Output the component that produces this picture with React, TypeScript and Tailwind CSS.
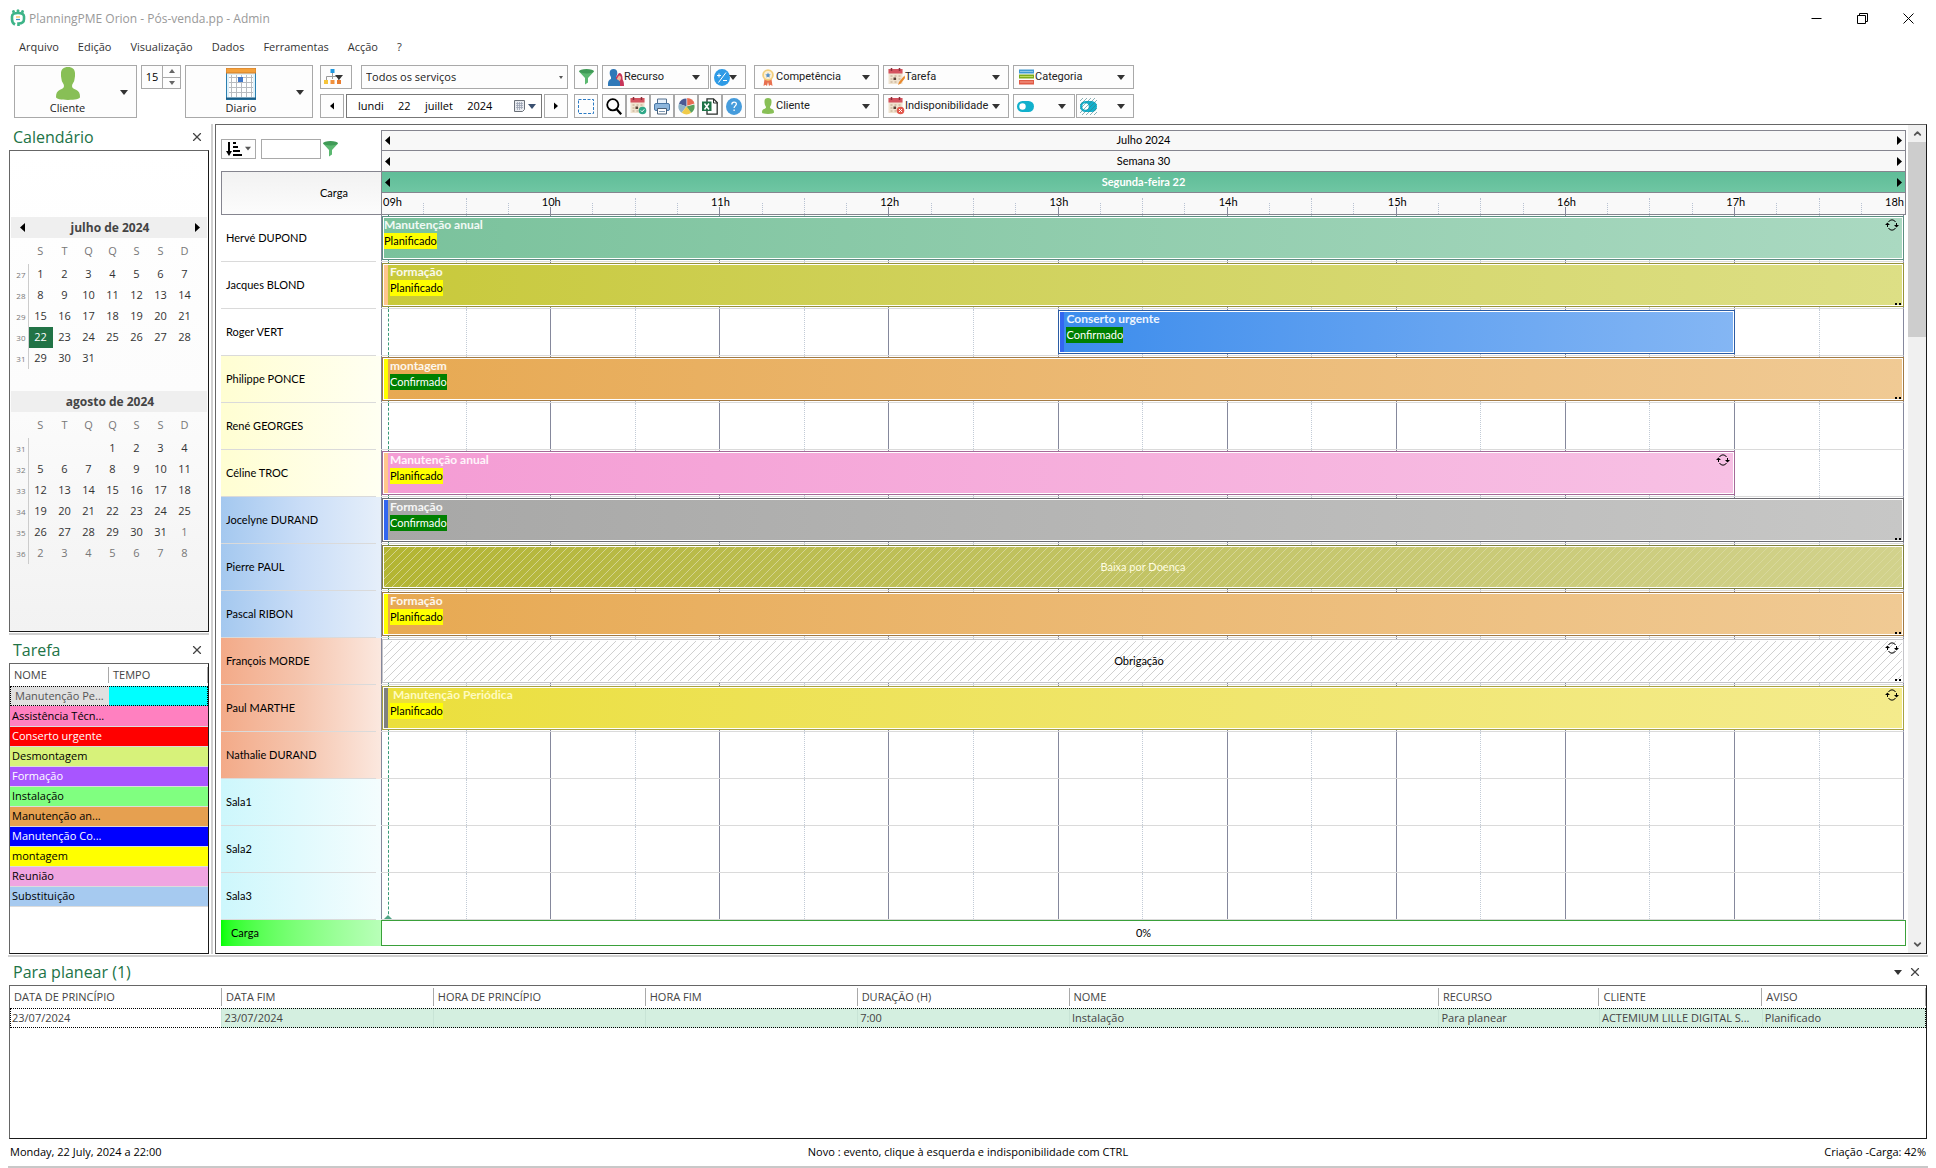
import React, { useState } from 'react';
import { ChevronDown, ChevronUp, X } from 'lucide-react';

interface Task {
  title?: string;
  status?: 'Planificado' | 'Confirmado';
  start: number;
  end: number;
  look: string;
  titleColor?: string;
  accent?: string;
  repeat?: boolean;
  more?: boolean;
  hatch?: { id: string; color: string };
  centered?: string;
}

interface Resource {
  name: string;
  group: string;
  task?: Task;
}

const white = 'bg-white';
const yellow = 'bg-linear-to-r from-[#fffed2] to-[#fffff2]';
const blue = 'bg-linear-to-r from-[#a4c8ef] via-[#c9ddf7] to-[#e6effa]';
const salmon = 'bg-linear-to-r from-[#f3aa88] via-[#f5c5ae] to-[#fbe8df]';
const cyan = 'bg-linear-to-r from-[#cdf7fc] to-[#f4fdfe]';

const orangeLook = 'border-[#a27a45] bg-linear-to-r from-[#e7a952] to-[#f0ca94]';

const resources: Resource[] = [
  { name: 'Hervé DUPOND', group: white, task: { title: 'Manutenção anual', status: 'Planificado', start: 0, end: 9, look: 'border-[#5c8f82] bg-linear-to-r from-[#7ac29c] to-[#aad9c1]', repeat: true } },
  { name: 'Jacques BLOND', group: white, task: { title: 'Formação', status: 'Planificado', start: 0, end: 9, look: 'border-[#98933a] bg-linear-to-r from-[#c8c93a] to-[#dddf85]', accent: 'bg-[#ffc68c]', more: true } },
  { name: 'Roger VERT', group: white, task: { title: 'Conserto urgente', status: 'Confirmado', start: 4, end: 8, look: 'border-[#2b5ca4] bg-linear-to-r from-[#3b8cec] to-[#84b6f4]', accent: 'bg-[#3366f0]' } },
  { name: 'Philippe PONCE', group: yellow, task: { title: 'montagem', status: 'Confirmado', start: 0, end: 9, look: orangeLook, accent: 'bg-[#ffff00]', more: true } },
  { name: 'René GEORGES', group: yellow },
  { name: 'Céline TROC', group: yellow, task: { title: 'Manutenção anual', status: 'Planificado', start: 0, end: 8, look: 'border-[#a56a98] bg-linear-to-r from-[#f49cd4] to-[#f7c0e4]', accent: 'bg-[#ffc68c]', repeat: true } },
  { name: 'Jocelyne DURAND', group: blue, task: { title: 'Formação', status: 'Confirmado', start: 0, end: 9, look: 'border-[#6c6c72] bg-linear-to-r from-[#a7a7a6] to-[#c7c7c6]', accent: 'bg-[#3366f0]', more: true } },
  { name: 'Pierre PAUL', group: blue, task: { centered: 'Baixa por Doença', start: 0, end: 9, look: 'border-[#80803c] bg-linear-to-r from-[#b3b532] to-[#d2d28c] text-[#fffde0]', hatch: { id: 'hatch-olive', color: '#dadaa2' } } },
  { name: 'Pascal RIBON', group: blue, task: { title: 'Formação', status: 'Planificado', start: 0, end: 9, look: orangeLook, accent: 'bg-[#ffff00]', more: true } },
  { name: 'François MORDE', group: salmon, task: { centered: 'Obrigação', start: 0, end: 9, look: 'border-[#c4c4c8] bg-white text-black', hatch: { id: 'hatch-grey', color: '#c4c4c4' }, repeat: true, more: true } },
  { name: 'Paul MARTHE', group: salmon, task: { title: '\u00a0Manutenção Periódica', status: 'Planificado', start: 0, end: 9, look: 'border-[#a8a244] bg-linear-to-r from-[#ebdf3a] to-[#f4eb8c]', titleColor: 'text-[#fffbc0]', accent: 'bg-[#808080]', repeat: true } },
  { name: 'Nathalie DURAND', group: salmon },
  { name: 'Sala1', group: cyan },
  { name: 'Sala2', group: cyan },
  { name: 'Sala3', group: cyan },
];

const taskTypes = [
  { name: 'Assistência Técn...', look: 'bg-[#ff80c0] text-black' },
  { name: 'Conserto urgente', look: 'bg-[#ff0000] text-white' },
  { name: 'Desmontagem', look: 'bg-[#d7f27a] text-black' },
  { name: 'Formação', look: 'bg-[#a855ff] text-white' },
  { name: 'Instalação', look: 'bg-[#80ff80] text-black' },
  { name: 'Manutenção an...', look: 'bg-[#e6a050] text-black' },
  { name: 'Manutenção Co...', look: 'bg-[#0000ff] text-white' },
  { name: 'montagem', look: 'bg-[#ffff00] text-black' },
  { name: 'Reunião', look: 'bg-[#f0a5e1] text-black' },
  { name: 'Substituição', look: 'bg-[#a6caf0] text-black' },
];

const months = [
  {
    title: 'julho de 2024',
    nav: true,
    weeks: [
      [27, 1, 2, 3, 4, 5, 6, 7],
      [28, 8, 9, 10, 11, 12, 13, 14],
      [29, 15, 16, 17, 18, 19, 20, 21],
      [30, 22, 23, 24, 25, 26, 27, 28],
      [31, 29, 30, 31, 0, 0, 0, 0],
    ],
  },
  {
    title: 'agosto de 2024',
    nav: false,
    weeks: [
      [31, 0, 0, 0, 1, 2, 3, 4],
      [32, 5, 6, 7, 8, 9, 10, 11],
      [33, 12, 13, 14, 15, 16, 17, 18],
      [34, 19, 20, 21, 22, 23, 24, 25],
      [35, 26, 27, 28, 29, 30, 31, 1],
      [36, 2, 3, 4, 5, 6, 7, 8],
    ],
  },
];

const planColumns = [
  { label: 'DATA DE PRINCÍPIO', value: '23/07/2024', width: 'w-[11.06%]' },
  { label: 'DATA FIM', value: '23/07/2024', width: 'w-[11.06%]' },
  { label: 'HORA DE PRINCÍPIO', value: '', width: 'w-[11.06%]' },
  { label: 'HORA FIM', value: '', width: 'w-[11.06%]' },
  { label: 'DURAÇÃO (H)', value: '7:00', width: 'w-[11.06%]' },
  { label: 'NOME', value: 'Instalação', width: 'w-[19.28%]' },
  { label: 'RECURSO', value: 'Para planear', width: 'w-[8.38%]' },
  { label: 'CLIENTE', value: 'ACTEMIUM LILLE DIGITAL S...', width: 'w-[8.5%]' },
  { label: 'AVISO', value: 'Planificado', width: 'w-[8.54%]' },
];

/* ---------- icons ---------- */

const Caret = ({ className = 'text-[#333]' }: { className?: string }) => (
  <svg width="8" height="5" viewBox="0 0 8 5" className={`shrink-0 ${className}`}>
    <path d="M0 0h8L4 5z" fill="currentColor" />
  </svg>
);

const Arrow = ({ left = false, small = false }: { left?: boolean; small?: boolean }) => (
  <svg width={small ? 4 : 5} height={small ? 8 : 9} viewBox="0 0 5 9" className="shrink-0">
    <path d={left ? 'M5 0v9L0 4.500z' : 'M0 0v9l5-4.500z'} fill="#000" />
  </svg>
);

const Logo = () => (
  <svg width="16" height="18" viewBox="0 0 16 18">
    <path d="M5 15.500A6 6 0 0 1 2 10V7.500C2 5 4.500 4 8 4s6 1 6 3.500V10c0 3-2 4.500-5.500 4.500V17" fill="none" stroke="#3db488" strokeWidth="2.600" />
    <circle cx="3.500" cy="2.500" r="1.500" fill="#3db488" />
    <circle cx="8" cy="1.800" r="1.500" fill="#3db488" />
    <circle cx="12.500" cy="2.500" r="1.500" fill="#3db488" />
    <path d="M6 8h4" stroke="#f2b84b" strokeWidth="1.200" />
    <path d="M6 10.500h4" stroke="#3a8ec8" strokeWidth="1.200" />
  </svg>
);

const Person = ({ width, height }: { width: number; height: number }) => (
  <svg width={width} height={height} viewBox="0 0 24 34" preserveAspectRatio="none">
    <path d="M12 0c4.500 0 7 2.500 7 6.500v3c0 1-.5 2-.5 3 0 3-2.500 4.500-2.500 7 0 2 1.500 2.800 4 4 3 1.500 4 3.500 4 7.500 0 2-5 3-12 3s-12-1-12-3c0-4 1-6 4-7.500 2.500-1.200 4-2 4-4 0-2.500-2.500-4-2.500-7 0-1-.5-2-.5-3v-3C5 2.500 7.500 0 12 0z" fill="#88bf56" />
  </svg>
);

const BigCalendar = () => (
  <svg width="30" height="32" viewBox="0 0 30 32">
    <rect x=".5" y="3.500" width="29" height="28" fill="#dff1fa" stroke="#2a7fb0" />
    <rect x="0" y="0" width="30" height="5" fill="#f4a13c" stroke="#cf7d28" />
    <rect x="3" y="7" width="24" height="22" fill="#fff" />
    <path d="M3 9.500h24M3 14.500h24M3 19.500h24M3 24.500h24M5.500 7v22M10.500 7v22M15.500 7v22M20.500 7v22M25.500 7v22" stroke="#b9bcc0" />
    <rect x="12" y="9" width="5" height="5" fill="#3e76c9" />
    <path d="M0 30.500h30" stroke="#1d5e86" strokeWidth="2" />
  </svg>
);

const OrgChart = () => (
  <svg width="18" height="16" viewBox="0 0 18 16">
    <path d="M8.500 4v6M2.500 11V7.500h12V11" fill="none" stroke="#9a9a9a" />
    <rect x="6.500" y="0" width="4" height="4" fill="#1e98e0" />
    <rect x="0" y="11" width="4" height="4" fill="#f5c43a" />
    <rect x="6.500" y="11" width="4" height="4" fill="#f0913c" />
    <rect x="13" y="11" width="4" height="4" fill="#e87b2e" />
  </svg>
);

const Funnel = () => (
  <svg width="15" height="16" viewBox="0 0 15 16">
    <path d="M0 2.500L6 9v6.500l3-2V9l6-6.500z" fill="#5bb870" />
    <ellipse cx="7.500" cy="2.200" rx="7.500" ry="2.200" fill="#3f9a56" />
  </svg>
);

const People = () => (
  <svg width="16" height="17" viewBox="0 0 16 17">
    <path d="M11 4c2.500 0 3.500 2 3.500 5 0 1.500.3 2 .8 3 .5 1 .7 2.500.7 5H8V8z" fill="#c8355a" />
    <path d="M11 6.500c1.200 0 2 1 2 2.500s-.8 3-2 3-2-1-2-2.500z" fill="#f0b79a" />
    <path d="M5.500 0C8 0 9.300 1.600 9.300 4c0 1.600-.6 3-1.300 4v2c1.500.8 4 1.500 4 4v3H0v-2.500c0-3 1.500-3.700 3-4.500V8C2.300 7 1.700 5.600 1.700 4 1.700 1.600 3 0 5.500 0z" fill="#2f78b8" />
  </svg>
);

const Percent = () => (
  <svg width="16" height="17" viewBox="0 0 16 17">
    <ellipse cx="8" cy="8.500" rx="8" ry="8.500" fill="#2e9be6" />
    <path d="M12 3.500L4.500 13.500M3 6.500h4M5 4.500v4M9 11.500h4" stroke="#fff" strokeWidth="1" fill="none" />
  </svg>
);

const Medal = () => (
  <svg width="12" height="17" viewBox="0 0 12 17">
    <path d="M2.500 10L1.500 17l2-1.200L5 17l1-4 1 4 1.500-1.200 2 1.200-1-7z" fill="#e8704f" />
    <circle cx="6" cy="6" r="5.800" fill="#f3cf7c" />
    <circle cx="6" cy="6" r="4" fill="#fbf0d6" />
    <path d="M6 3.500l.8 1.700 1.900.2-1.400 1.300.4 1.900L6 7.700l-1.700.9.4-1.900-1.400-1.300 1.900-.2z" fill="#5590c8" />
  </svg>
);

const SmallCalendar = ({ mark }: { mark: 'edit' | 'ok' | 'no' }) => (
  <svg width="17" height="18" viewBox="0 0 17 18" className="shrink-0">
    <rect x=".5" y="1" width="14" height="15" fill="#f0e3cf" />
    <rect x=".5" y="1" width="14" height="4.500" fill="#d4535f" />
    <path d="M3.500 0v3M11.500 0v3" stroke="#8b2f3a" strokeWidth="1.500" />
    <path d="M2.500 8h10M2.500 11h10M2.500 14h7" stroke="#cdb9a0" strokeWidth="1.600" strokeDasharray="2 2" />
    <rect x="5.500" y="9.500" width="2.500" height="2.500" fill="#5a4438" />
    {mark === 'edit' && <path d="M16.500 7.500L11 14l-1 3 2.800-1.500L17 10z" fill="#e8892e" />}
    {mark === 'ok' && (
      <>
        <circle cx="12.500" cy="13.500" r="3.800" fill="#2fa888" />
        <path d="M10.800 13.500l1.300 1.300 2.200-2.500" stroke="#fff" fill="none" />
      </>
    )}
    {mark === 'no' && (
      <>
        <circle cx="12.500" cy="13.500" r="3.800" fill="#e2574c" />
        <path d="M11 12l3 3M14 12l-3 3" stroke="#fff" fill="none" />
      </>
    )}
  </svg>
);

const Stack = () => (
  <svg width="15" height="16" viewBox="0 0 15 16">
    <path d="M0 .5h15v4H0z" fill="#3f9ad2" />
    <path d="M0 5.500h15v4H0z" fill="#7dac1c" />
    <path d="M0 11h15v4.500H0z" fill="#e05a45" />
    <path d="M1 2.500h13" stroke="#8cc6e8" />
    <path d="M1 7.500h13" stroke="#bcd95f" />
    <path d="M1 13h13" stroke="#f5a494" />
  </svg>
);

const Selection = () => (
  <svg width="16" height="15" viewBox="0 0 16 15">
    <rect x=".5" y=".5" width="15" height="14" fill="none" stroke="#2c7bc4" strokeDasharray="3 1.500" />
  </svg>
);

const Magnifier = () => (
  <svg width="16" height="17" viewBox="0 0 16 17">
    <circle cx="6.800" cy="6.800" r="5.600" fill="none" stroke="#000" strokeWidth="1.800" />
    <path d="M10.500 11l4.700 5.300" stroke="#000" strokeWidth="2.200" />
  </svg>
);

const Printer = () => (
  <svg width="16" height="17" viewBox="0 0 16 17">
    <path d="M3.500 6V1h9v5" fill="#e8f1fa" stroke="#54718f" />
    <rect x=".5" y="5.500" width="15" height="7" rx="1.500" fill="#8db6dc" stroke="#4a78a6" />
    <path d="M3.500 10.500h9v5.500h-9z" fill="#fff" stroke="#4a6078" />
    <path d="M5 13.500h6" stroke="#7a96b2" />
  </svg>
);

const Pie = () => (
  <svg width="17" height="17" viewBox="0 0 17 17">
    <path d="M8.500 8.500V.5a8 8 0 0 0-7.600 5.300z" fill="#4a5a94" />
    <path d="M8.500 8.500L.9 5.800a8 8 0 0 0 2.800 9z" fill="#8fb4c8" />
    <path d="M8.500 8.500l-4.800 6.300a8 8 0 0 0 9.600 0z" fill="#f0cb4a" />
    <path d="M8.500 8.500l4.800 6.300a8 8 0 0 0 3-8.300z" fill="#5aa05c" />
    <path d="M9.200 7.800V0a8 8 0 0 1 7.300 5.600z" fill="#e86b52" />
  </svg>
);

const Excel = () => (
  <svg width="16" height="17" viewBox="0 0 16 17">
    <path d="M5 4V.8h6.500l3.700 3.700v11.700H5V13" fill="#fff" stroke="#2a2f2c" strokeWidth="1.300" />
    <path d="M11.500 1v4h4" fill="none" stroke="#2a2f2c" />
    <rect x="0" y="3.500" width="9.500" height="9.500" fill="#1d7346" />
    <path d="M2.500 5.500l4.500 6M7 5.500l-4.500 6" stroke="#fff" strokeWidth="1.500" />
  </svg>
);

const Help = () => (
  <svg width="16" height="17" viewBox="0 0 16 17">
    <ellipse cx="8" cy="8.500" rx="8" ry="8.500" fill="#469cdc" />
    <path d="M5.800 6.500c0-3.200 4.600-3.200 4.600-.4 0 1.700-2.300 1.900-2.300 3.900M8.100 11.500v1.500" stroke="#fff" fill="none" strokeWidth="1.300" />
  </svg>
);

const Toggle = ({ striped = false }: { striped?: boolean }) => (
  <svg width="17" height="17" viewBox="0 0 17 17">
    <rect x="0" y="3" width="17" height="11" rx="5.500" fill="#11b0cc" />
    <circle cx="5.500" cy="8.500" r="3.200" fill="#fff" />
    {striped && (
      <path d="M0 3l3-3M0 7l7-7M0 11L11 0M0 15L15 0M2 17L17 2M6 17L17 6M10 17l7-7M14 17l3-3" stroke="#3c7f88" strokeWidth=".6" />
    )}
  </svg>
);

const DatePickerIcon = () => (
  <svg width="11" height="12" viewBox="0 0 11 12">
    <path d="M.5.500h10v9l-2 2h-8z" fill="#e8ebf0" stroke="#6a7078" />
    <path d="M2 3.500h7M2 5.500h7M2 7.500h7M3.500 2v8M5.500 2v8M7.500 2v7" stroke="#9aa3b4" strokeWidth=".8" />
  </svg>
);

const SortIcon = () => (
  <svg width="16" height="14" viewBox="0 0 16 14">
    <path d="M3 0v10" stroke="#000" strokeWidth="2" />
    <path d="M0 9h6l-3 5z" />
    <path d="M7 1h3M7 5h5M7 9h7M7 13h9" stroke="#000" strokeWidth="2" />
  </svg>
);

const RepeatIcon = () => (
  <svg width="14" height="12" viewBox="0 0 14 12" className="absolute top-[3px] right-[5px]">
    <path d="M3.500 3C5 .2 9 .2 10.500 3M10.500 9C9 11.800 5 11.800 3.500 9" fill="none" stroke="#000" />
    <path d="M2.500 5v3M11.500 4v3" stroke="#000" />
    <path d="M0 6l2.500-2.500L5 6zM9 6h5l-2.500 2.500z" />
  </svg>
);

const WindowIcon = ({ d }: { d: string }) => (
  <svg width="11" height="11" viewBox="0 0 11 11" fill="none" stroke="#000">
    <path d={d} />
  </svg>
);

/* ---------- toolbar ---------- */

const box = 'flex items-center border border-[#a9a9a9] bg-[#fdfdfd]';

const DropButton = ({ icon, label, width }: { icon: React.ReactNode; label: string; width: string }) => (
  <button type="button" aria-haspopup="menu" className={`${box} ${width} h-6 px-1 pr-2 font-[Roboto]`}>
    <span className="flex w-[17px] shrink-0 justify-center">{icon}</span>
    <span className="flex-1 text-left">{label}</span>
    <Caret />
  </button>
);

const IconButton = ({ label, children }: { label: string; children: React.ReactNode }) => (
  <button type="button" aria-label={label} className={`${box} h-6 w-6 justify-center`}>
    {children}
  </button>
);

const Toolbar = () => (
  <div className="flex items-start px-[14px] pt-[5px] pb-[6px] text-[11px] text-[#222]">
    <button type="button" className={`${box} relative h-[53px] w-[123px] flex-col pt-px`}>
      <span className="-ml-4"><Person width={24} height={33} /></span>
      <span className="-ml-4 leading-4">Cliente</span>
      <span className="absolute top-6 right-2"><Caret /></span>
    </button>

    <div className={`${box} ml-1 h-6 w-10`}>
      <input aria-label="Intervalo" defaultValue="15" className="w-5 min-w-0 flex-1 text-center text-black outline-none" />
      <div className="flex h-full w-[18px] flex-col border-l border-[#a9a9a9]">
        <button type="button" aria-label="Aumentar" className="flex flex-1 items-center justify-center border-b border-[#a9a9a9]">
          <svg width="6" height="4" viewBox="0 0 6 4"><path d="M0 4h6L3 0z" fill="#666" /></svg>
        </button>
        <button type="button" aria-label="Diminuir" className="flex flex-1 items-center justify-center">
          <svg width="6" height="4" viewBox="0 0 6 4"><path d="M0 0h6L3 4z" fill="#666" /></svg>
        </button>
      </div>
    </div>

    <button type="button" className={`${box} relative ml-1 h-[53px] w-32 flex-col pt-px`}>
      <span className="-ml-4 flex h-[33px] items-center"><BigCalendar /></span>
      <span className="-ml-4 leading-4">Diario</span>
      <span className="absolute top-6 right-2"><Caret /></span>
    </button>

    <div className="ml-[7px] flex w-[248px] flex-col gap-[5px]">
      <div className="flex gap-[9px]">
        <button type="button" aria-label="Organograma" aria-haspopup="menu" className={`${box} relative h-6 w-8 pl-[3px]`}>
          <OrgChart />
          <span className="absolute right-2"><Caret /></span>
        </button>
        <div className={`${box} relative h-6 flex-1`}>
          <select aria-label="Serviços" className="h-full w-full appearance-none px-1 outline-none">
            <option>Todos os serviços</option>
          </select>
          <svg width="4" height="3" viewBox="0 0 4 3" className="absolute right-1"><path d="M0 0h4L2 3z" fill="#555" /></svg>
        </div>
      </div>
      <div className="flex gap-[2px]">
        <IconButton label="Dia anterior"><Arrow left small /></IconButton>
        <div className="flex h-6 flex-1 items-center border border-[#777] pr-[5px] pl-[11px]">
          <input
            aria-label="Data"
            defaultValue={'lundi\u00a0\u00a0\u00a0\u00a0\u00a022\u00a0\u00a0\u00a0\u00a0\u00a0juillet\u00a0\u00a0\u00a0\u00a0\u00a02024'}
            className="w-0 min-w-0 flex-1 text-black outline-none"
          />
          <button type="button" aria-label="Abrir calendário" className="flex items-center gap-[3px]">
            <DatePickerIcon />
            <Caret className="text-[#3a5070]" />
          </button>
        </div>
        <IconButton label="Dia seguinte"><Arrow small /></IconButton>
      </div>
    </div>

    <div className="ml-[6px] flex flex-col gap-[5px]">
      <div className="flex">
        <IconButton label="Filtrar"><Funnel /></IconButton>
        <div className="ml-1 flex gap-px">
          <DropButton icon={<People />} label="Recurso" width="w-[107px]" />
          <button type="button" aria-label="Valores" aria-haspopup="menu" className={`${box} relative h-6 w-9 pl-[3px]`}>
            <Percent />
            <span className="absolute right-2"><Caret /></span>
          </button>
        </div>
      </div>
      <div className="flex">
        <IconButton label="Selecionar"><Selection /></IconButton>
        <div className="ml-1 flex">
          <IconButton label="Procurar"><Magnifier /></IconButton>
          <IconButton label="Validar"><SmallCalendar mark="ok" /></IconButton>
          <IconButton label="Imprimir"><Printer /></IconButton>
          <IconButton label="Estatísticas"><Pie /></IconButton>
          <IconButton label="Excel"><Excel /></IconButton>
          <IconButton label="Ajuda"><Help /></IconButton>
        </div>
      </div>
    </div>

    <div className="ml-2 flex flex-col gap-[5px]">
      <div className="flex gap-1">
        <DropButton icon={<Medal />} label="Competência" width="w-[125px]" />
        <DropButton icon={<SmallCalendar mark="edit" />} label="Tarefa" width="w-[126px]" />
        <DropButton icon={<Stack />} label="Categoria" width="w-[121px]" />
      </div>
      <div className="flex gap-1">
        <DropButton icon={<Person width={12} height={16} />} label="Cliente" width="w-[125px]" />
        <DropButton icon={<SmallCalendar mark="no" />} label="Indisponibilidade" width="w-[126px]" />
        <div className="flex gap-px">
          <button type="button" aria-label="Ativar" className={`${box} h-6 w-[62px] justify-between pr-2 pl-[3px]`}><Toggle /><Caret /></button>
          <button type="button" aria-label="Ativar indisponibilidades" className={`${box} h-6 w-[58px] justify-between pr-2 pl-[3px]`}><Toggle striped /><Caret /></button>
        </div>
      </div>
    </div>
  </div>
);

/* ---------- left panels ---------- */

const PanelTitle = ({ title, menu = false }: { title: string; menu?: boolean }) => (
  <div className="flex h-[26px] items-center justify-between pr-[5px] pl-1">
    <h2 className="text-base text-[#217346]">{title}</h2>
    <span className="flex items-center gap-[6px]">
      {menu && <Caret />}
      <button type="button" aria-label={`Fechar ${title}`}><X size={14} strokeWidth={2} className="text-[#444]" /></button>
    </span>
  </div>
);

const frame = 'border border-t-[#666] border-l-[#666] border-r-[#1a1a1a] border-b-[#1a1a1a]';

const CalendarPanel = () => {
  const [selected, setSelected] = useState('julho de 2024-22');

  return (
    <section>
      <PanelTitle title="Calendário" />
      <div className={`${frame} h-[482px] bg-linear-to-b from-white via-[#fcfcfc] to-[#f2f2f2] px-px pt-[66px]`}>
        {months.map(month => (
          <div key={month.title} className="mb-[22px]">
            <div className="flex h-[21px] items-center justify-between bg-[#efefef] pr-[7px] pl-[9px] text-xs font-bold text-[#444]">
              {month.nav ? <button type="button" aria-label="Mês anterior"><Arrow left /></button> : <span />}
              <span>{month.title}</span>
              {month.nav ? <button type="button" aria-label="Mês seguinte"><Arrow /></button> : <span />}
            </div>
            <table className="text-center text-[11px] text-[#333]">
              <thead>
                <tr className="h-[26px] text-[#777]">
                  <th className="w-[17px]" />
                  {['S', 'T', 'Q', 'Q', 'S', 'S', 'D'].map((d, i) => (
                    <th key={i} className="w-6 font-normal">{d}</th>
                  ))}
                </tr>
              </thead>
              <tbody>
                {month.weeks.map(([week, ...days], w) => (
                  <tr key={week} className="h-[21px]">
                    <td className="border-r border-[#ccc] pr-[2px] text-right text-[8px] text-[#777]">{week}</td>
                    {days.map((day, i) => {
                      const key = `${month.title}-${day}`;
                      const next = w > 3 && day > 0 && day < 9;
                      const look = key === selected && !next ? 'bg-[#217346] text-white' : next ? 'text-[#777]' : '';
                      return (
                        <td key={i} className="p-0">
                          {day > 0 && (
                            <button type="button" onClick={() => setSelected(key)} className={`block h-[21px] w-6 ${look}`}>{day}</button>
                          )}
                        </td>
                      );
                    })}
                  </tr>
                ))}
              </tbody>
            </table>
          </div>
        ))}
      </div>
    </section>
  );
};

const TaskPanel = () => (
  <section className="flex flex-1 flex-col">
    <PanelTitle title="Tarefa" />
    <div className={`${frame} flex-1`}>
      <table className="w-full table-fixed text-left text-[11px]">
        <thead>
          <tr className="h-[22px] text-[#444]">
            <th className="p-0 font-normal"><div className="border-r border-[#a9a9a9] pl-1 leading-4">NOME</div></th>
            <th className="p-0 font-normal"><div className="border-r border-[#a9a9a9] pl-1 leading-4">TEMPO</div></th>
          </tr>
        </thead>
        <tbody>
          <tr className="h-5 outline outline-1 -outline-offset-1 outline-dotted outline-black">
            <td className="bg-[#e0e0e0] p-0 pl-[5px] whitespace-nowrap text-[#555]">Manutenção Pe...</td>
            <td className="bg-[#00ffff] p-0" />
          </tr>
          {taskTypes.map(t => (
            <tr key={t.name} className={`h-5 border-b border-[#dcdcdc] ${t.look}`}>
              <td colSpan={2} className="p-0 pl-[2px] leading-4">{t.name}</td>
            </tr>
          ))}
        </tbody>
      </table>
    </div>
  </section>
);

/* ---------- planning ---------- */

const HeaderBand = ({ label, look }: { label: string; look: string }) => (
  <div className={`flex items-center justify-between border border-b-0 border-[#85858f] px-[3px] ${look}`}>
    <button type="button" aria-label="Anterior"><Arrow left /></button>
    <span>{label}</span>
    <button type="button" aria-label="Seguinte"><Arrow /></button>
  </div>
);

const HourScale = () => (
  <div className="relative h-[23px] border border-[#85858f] bg-[#f9f9f9]">
    <div className="absolute inset-0 mr-[2px] flex items-end">
      {Array.from({ length: 36 }, (_, i) => (
        <span
          key={i}
          className={
            i === 0 ? 'flex-1'
              : i % 4 === 0 ? 'h-[7px] flex-1 border-l border-[#85889c]'
                : i % 4 === 2 ? 'h-4 flex-1 border-l border-dotted border-[#b8c2d2]'
                  : 'h-[11px] flex-1 border-l border-dotted border-[#b8c2d2]'
          }
        />
      ))}
    </div>
    <div className="relative flex text-center leading-[18px]">
      <span className="w-1/18 pl-px text-left">09h</span>
      {['10h', '11h', '12h', '13h', '14h', '15h', '16h', '17h'].map(h => (
        <span key={h} className="flex-1">{h}</span>
      ))}
      <span className="w-1/18 pr-px text-right">18h</span>
    </div>
  </div>
);

const TaskBar = ({ task }: { task: Task }) => {
  const left = `${(task.start / 9) * 100}%`;
  const width = `${((task.end - task.start) / 9) * 100}%`;

  return (
    <div className="relative h-11" style={{ marginLeft: left, width }}>
      <div className={`relative flex h-full overflow-hidden border inset-ring inset-ring-white ${task.look}`}>
        {task.hatch && (
          <svg className="absolute inset-px h-[calc(100%-2px)] w-[calc(100%-2px)]">
            <defs>
              <pattern id={task.hatch.id} width="8" height="8" patternUnits="userSpaceOnUse">
                <path d="M-1 9L9-1M-1 1l2-2M7 9l2-2" stroke={task.hatch.color} strokeWidth=".8" />
              </pattern>
            </defs>
            <rect width="100%" height="100%" fill={`url(#${task.hatch.id})`} />
          </svg>
        )}
        {task.accent && <span className={`my-px ml-px w-1 ${task.accent}`} />}
        {task.centered ? (
          <span className={`relative m-auto ${task.repeat ? 'pr-2' : ''}`}>{task.centered}</span>
        ) : (
          <div className={task.accent ? 'pl-[2px]' : 'pl-px'}>
            <div className={`text-xs leading-4 font-bold ${task.titleColor || 'text-white/90'}`}>{task.title}</div>
            <span className={`block w-fit leading-4 ${task.status === 'Planificado' ? 'bg-[#ffff00] text-black' : 'bg-[#008000] text-white'}`}>
              {task.status}
            </span>
          </div>
        )}
      </div>
      {task.repeat && <RepeatIcon />}
      {task.more && (
        <span className="absolute right-[3px] bottom-[2px] flex gap-[2px]">
          <i className="h-[2px] w-[2px] bg-black" />
          <i className="h-[2px] w-[2px] bg-black" />
        </span>
      )}
    </div>
  );
};

const ResourceRow = ({ resource }: { resource: Resource }) => (
  <div className="flex h-[47px]">
    <div className={`w-40 shrink-0 ${resource.group}`}>
      <div className="mr-[5px] flex h-full items-center border-b border-[#dadada] pl-[5px]">{resource.name}</div>
    </div>
    <div className="relative mr-[2px] flex-1 border-r border-b border-r-[#85889c] border-b-[#dadada] pt-px">
      <div className="absolute inset-0 flex">
        {Array.from({ length: 18 }, (_, i) => (
          <span key={i} className={i % 2 ? 'flex-1 border-l border-dotted border-[#c2cbd6]' : 'flex-1 border-l border-[#85889c]'} />
        ))}
      </div>
      <span className="absolute inset-y-0 left-[7px] border-l border-dashed border-[#3a9a78]" />
      {resource.task && <div className="-mr-px pl-px"><TaskBar task={resource.task} /></div>}
    </div>
  </div>
);

const Planning = () => (
  <main className={`${frame} flex flex-1 font-[Lato] text-[11px] text-black`}>
    <div className="min-w-0 flex-1 pt-[5px] pr-[2px] pb-[7px] pl-[5px]">
      <div className="flex">
        <div className="flex w-40 shrink-0 flex-col">
          <div className="flex flex-1 items-center gap-[5px] pb-1">
            <button type="button" aria-label="Ordenar" className={`${box} h-5 w-[35px] justify-between px-1`}>
              <SortIcon />
              <Caret className="w-[6px] text-[#555]" />
            </button>
            <input aria-label="Filtro de recursos" className="h-5 w-[60px] border border-[#a9a9a9] px-1 outline-none" />
            <button type="button" aria-label="Aplicar filtro" className="-ml-[3px]"><Funnel /></button>
          </div>
          <div className="flex h-11 items-center border border-r-0 border-[#85858f] bg-linear-to-b from-[#f2f2f2] to-[#fcfcfc] pl-[98px]">Carga</div>
        </div>
        <div className="flex-1">
          <HeaderBand label="Julho 2024" look="h-5 bg-[#f8f8f8]" />
          <HeaderBand label="Semana 30" look="h-[21px] bg-[#f8f8f8]" />
          <HeaderBand label="Segunda-feira 22" look="h-[21px] bg-linear-to-b from-[#5fbd98] to-[#6fc6a3] font-bold text-white" />
          <HourScale />
        </div>
      </div>

      {resources.map(r => <ResourceRow key={r.name} resource={r} />)}

      <div className="relative flex h-[26px]">
        <svg width="8" height="4" viewBox="0 0 8 4" className="absolute -top-[5px] left-[163px]"><path d="M0 4h8L4 0z" fill="#4fa585" /></svg>
        <div className="flex w-40 shrink-0 items-center bg-linear-to-r from-[#00ff00] to-[#b8ffb8] pl-[10px]">Carga</div>
        <div className="flex flex-1 items-center justify-center border border-[#3aa03a]">0%</div>
      </div>
    </div>
    <div className="flex w-[18px] flex-col items-center bg-[#f0f0f0]">
      <button type="button" aria-label="Subir" className="flex h-[17px] items-center text-[#555]"><ChevronUp size={11} strokeWidth={4} /></button>
      <div className="h-[195px] w-full bg-[#cdcdcd]" />
      <button type="button" aria-label="Descer" className="mt-auto flex h-[17px] items-center text-[#555]"><ChevronDown size={11} strokeWidth={4} /></button>
    </div>
  </main>
);

const PlanPanel = () => (
  <section className="flex flex-1 flex-col px-[9px] pt-[2px]">
    <PanelTitle title="Para planear (1)" menu />
    <div className={`${frame} flex-1`}>
      <table className="w-full table-fixed text-left text-[11px] text-[#444]">
        <thead>
          <tr className="h-[22px]">
            {planColumns.map(c => (
              <th key={c.label} className={`${c.width} p-0 font-normal`}>
                <div className="border-r border-[#a9a9a9] pl-1 leading-[18px]">{c.label}</div>
              </th>
            ))}
          </tr>
        </thead>
        <tbody>
          <tr className="h-5 outline outline-1 -outline-offset-1 outline-dotted outline-black">
            {planColumns.map((c, i) => (
              <td key={c.label} className={`p-0 pl-[2px] whitespace-nowrap ${i ? 'border-l border-[#c8e4d6] bg-[#d4efe0]' : ''}`}>{c.value}</td>
            ))}
          </tr>
        </tbody>
      </table>
    </div>
  </section>
);

const App = () => (
  <div className="flex min-h-screen flex-col bg-white font-['Open_Sans','Noto_Sans',sans-serif]">
    <header className="flex h-9 items-center pr-[22px] pl-[10px]">
      <Logo />
      <h1 className="ml-[3px] flex-1 pt-[2px] text-xs text-[#999]">PlanningPME Orion - Pós-venda.pp - Admin</h1>
      <div className="flex items-center gap-[35px]">
        <button type="button" aria-label="Minimizar"><WindowIcon d="M.5 5.500h10" /></button>
        <button type="button" aria-label="Restaurar"><WindowIcon d="M.5 2.500h8v8h-8zM2.500 2.500v-2h8v8h-2" /></button>
        <button type="button" aria-label="Fechar"><WindowIcon d="M.5.500l10 10M10.500.500l-10 10" /></button>
      </div>
    </header>

    <nav className="flex h-6 items-center gap-[19px] px-[19px] pb-[2px] text-[11px] text-[#333]">
      {['Arquivo', 'Edição', 'Visualização', 'Dados', 'Ferramentas', 'Acção', '?'].map(item => (
        <button key={item} type="button">{item}</button>
      ))}
    </nav>

    <Toolbar />

    <div className="flex px-[9px]">
      <aside className="flex w-50 shrink-0 flex-col">
        <CalendarPanel />
        <div className="mt-px mb-[2px] h-[2px] bg-[#d0d0d0]" />
        <TaskPanel />
      </aside>
      <div className="mx-[2px] w-[2px] bg-[#d0d0d0]" />
      <Planning />
    </div>

    <div className="mx-2 mt-px h-[2px] bg-[#d0d0d0]" />
    <PlanPanel />

    <footer className="mx-2 grid grid-cols-3 border-b-2 border-[#c8c8c8] px-[2px] pt-[5px] pb-[6px] text-[11px] leading-4 text-black">
      <span>Monday, 22 July, 2024 a 22:00</span>
      <span className="text-center">Novo : evento, clique à esquerda e indisponibilidade com CTRL</span>
      <span className="text-right">Criação -Carga: 42%</span>
    </footer>
  </div>
);

export default App;
